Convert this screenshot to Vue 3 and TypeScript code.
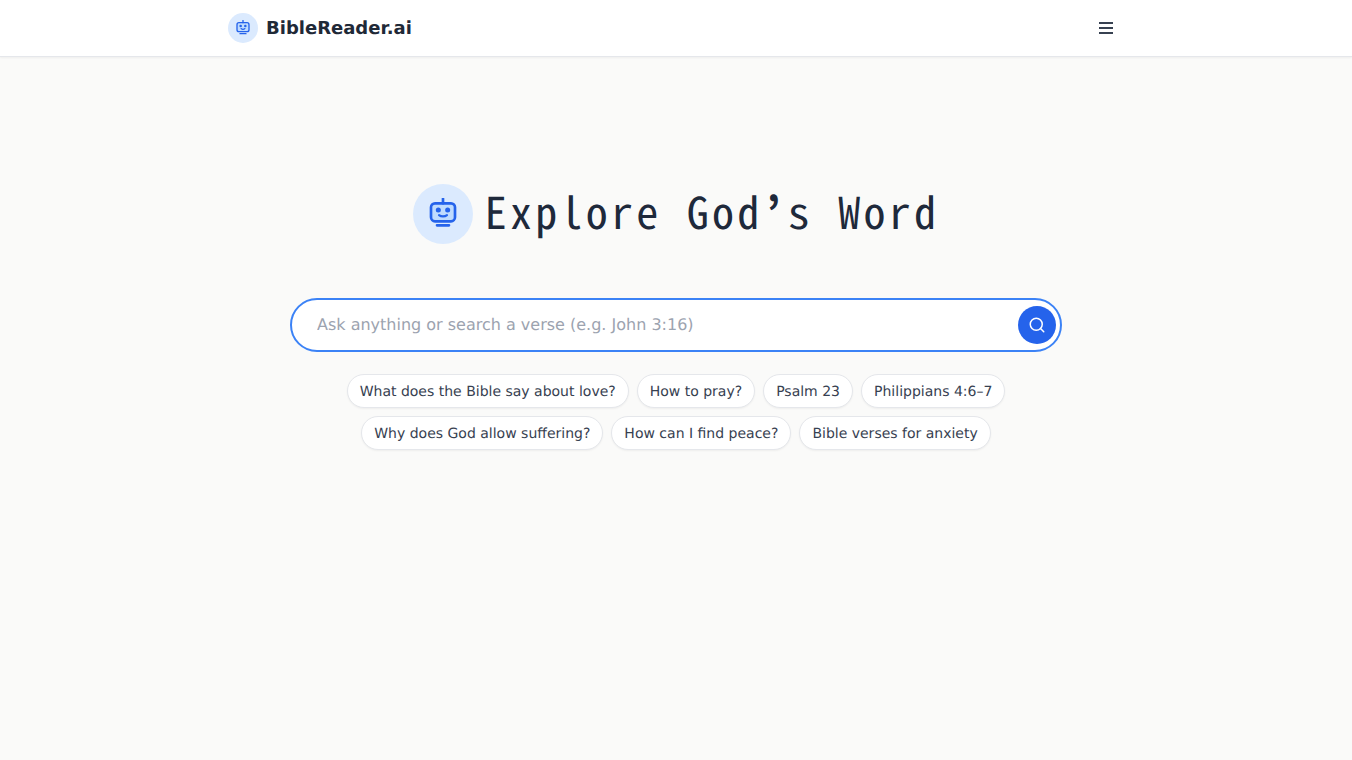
<script setup lang="ts">
const rows: string[][] = [
  ['What does the Bible say about love?', 'How to pray?', 'Psalm 23', 'Philippians 4:6–7'],
  ['Why does God allow suffering?', 'How can I find peace?', 'Bible verses for anxiety'],
]
</script>

<template>
  <div class="page">
    <header class="topbar">
      <div class="topbar-inner">
        <a class="brand">
          <span class="brand-badge">
            <svg viewBox="0 0 24 24" width="16" height="16" fill="none" stroke="#2563eb" stroke-width="2" stroke-linecap="round" stroke-linejoin="round">
              <rect x="3" y="4" width="18" height="13.5" rx="3" fill="#bfdbfe" />
              <path d="M12 .5V4M7.5 20.5h9" />
              <circle cx="8.5" cy="9" r=".9" fill="#2563eb" />
              <circle cx="15.5" cy="9" r=".9" fill="#2563eb" />
              <path d="M9 12.8c1.6 1.3 4.4 1.3 6 0" stroke-width="1.6" />
            </svg>
          </span>
          <span class="brand-name">BibleReader.ai</span>
        </a>
        <button type="button" class="menu-button" aria-label="Menu">
          <svg viewBox="0 0 24 24" width="24" height="24" fill="none" stroke="#374151" stroke-width="2">
            <path d="M5 7h14M5 12h14M5 17h14" />
          </svg>
        </button>
      </div>
    </header>

    <main class="hero">
      <div class="title-row">
        <span class="hero-badge">
          <svg viewBox="0 0 24 24" width="32" height="32" fill="none" stroke="#2563eb" stroke-width="2" stroke-linecap="round" stroke-linejoin="round">
            <rect x="3" y="4" width="18" height="13.5" rx="3" fill="#bfdbfe" />
            <path d="M12 .5V4M7.5 20.5h9" />
            <circle cx="8.5" cy="9" r=".9" fill="#2563eb" />
            <circle cx="15.5" cy="9" r=".9" fill="#2563eb" />
            <path d="M9 12.8c1.6 1.3 4.4 1.3 6 0" stroke-width="1.6" />
          </svg>
        </span>
        <h1>Explore God<span class="apostrophe">’</span>s Word</h1>
      </div>

      <form class="search" @submit.prevent>
        <input type="text" placeholder="Ask anything or search a verse (e.g. John 3:16)" />
        <button type="submit" class="search-button" aria-label="Search">
          <svg viewBox="0 0 24 24" width="18" height="18" fill="none" stroke="#fff" stroke-width="2" stroke-linecap="round">
            <circle cx="11" cy="11" r="8" />
            <path d="m21 21-4.3-4.3" />
          </svg>
        </button>
      </form>

      <div class="suggestions">
        <div v-for="(row, i) in rows" :key="i" class="suggestion-row">
          <button v-for="label in row" :key="label" type="button" class="chip">{{ label }}</button>
        </div>
      </div>
    </main>
  </div>
</template>

<style>
html,
body {
  margin: 0;
  background: #fafaf9;
}
</style>

<style scoped>
.page {
  min-height: 760px;
  background: #fafaf9;
  font-family: 'DejaVu Sans', sans-serif;
  color: #1f2937;
  text-rendering: geometricPrecision;
}

.topbar {
  height: 57px;
  box-sizing: border-box;
  background: #fff;
  border-bottom: 1px solid #e5e7eb;
  box-shadow: 0 1px 2px rgba(0, 0, 0, 0.05);
}

.topbar-inner {
  width: 896px;
  height: 56px;
  margin: 0 auto;
  display: flex;
  align-items: center;
  justify-content: space-between;
}

.brand {
  display: flex;
  align-items: center;
  gap: 8px;
}

.brand-badge {
  width: 30px;
  height: 30px;
  border-radius: 50%;
  background: #dbeafe;
  display: flex;
  align-items: center;
  justify-content: center;
}

.brand-name {
  font-size: 18px;
  font-weight: 700;
}

.menu-button {
  background: none;
  border: none;
  padding: 6px;
  display: flex;
}

.hero {
  display: flex;
  flex-direction: column;
  align-items: center;
  padding-top: 127px;
}

.title-row {
  display: flex;
  align-items: center;
  gap: 12px;
}

.hero-badge {
  width: 60px;
  height: 60px;
  border-radius: 50%;
  background: #dbeafe;
  display: flex;
  align-items: center;
  justify-content: center;
}

h1 {
  margin: 0;
  padding-bottom: 8px;
  font-family: 'Noto Sans Mono CJK JP', 'Noto Sans CJK JP', monospace;
  font-size: 44px;
  line-height: 52px;
  font-weight: 400;
  letter-spacing: 3.25px;
  color: #1e293b;
}

.apostrophe {
  display: inline-block;
  width: 25.25px;
  text-align: center;
  font-weight: 700;
}

.search {
  position: relative;
  width: 772px;
  margin-top: 54px;
}

.search input {
  display: block;
  width: 100%;
  height: 54px;
  box-sizing: border-box;
  border: 2px solid #3b82f6;
  border-radius: 27px;
  padding: 0 60px 2px 25px;
  font: 16px 'DejaVu Sans', sans-serif;
  text-rendering: geometricPrecision;
  background: #fff;
  outline: none;
}

.search input::placeholder {
  color: #9ca3af;
}

.search-button {
  position: absolute;
  top: 8px;
  right: 6px;
  width: 38px;
  height: 38px;
  border: none;
  border-radius: 50%;
  background: #2563eb;
  display: flex;
  align-items: center;
  justify-content: center;
  padding: 0;
}

.suggestions {
  margin-top: 22px;
  display: flex;
  flex-direction: column;
  gap: 8px;
}

.suggestion-row {
  display: flex;
  justify-content: center;
  gap: 8px;
}

.chip {
  height: 34px;
  padding: 2px 12px 0;
  background: #fff;
  border: 1px solid #e5e7eb;
  border-radius: 17px;
  box-shadow: 0 1px 2px rgba(0, 0, 0, 0.05);
  font: 14px 'DejaVu Sans', sans-serif;
  text-rendering: geometricPrecision;
  color: #374151;
}
</style>
